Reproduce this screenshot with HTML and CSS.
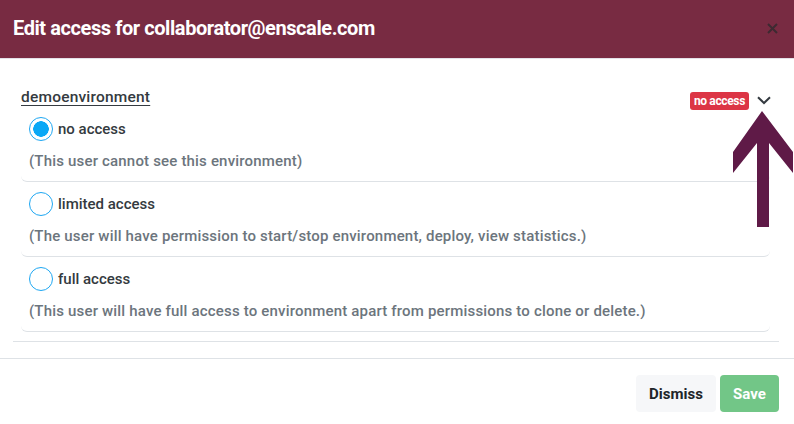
FILE: index.html
```html
<!DOCTYPE html>
<html lang="en">
<head>
<meta charset="utf-8">
<title>Edit access</title>
<link rel="stylesheet" href="styles.css">
</head>
<body>
<div class="modal">
  <header class="modal-header">
    <h1 class="modal-title">Edit access for collaborator@enscale.com</h1>
    <button class="close" aria-label="Close">
      <svg width="11" height="11" viewBox="0 0 11 11"><path d="M1 1L10 10M10 1L1 10" stroke="currentColor" stroke-width="2"/></svg>
    </button>
  </header>
  <main class="modal-body">
    <section class="env">
      <div class="env-head">
        <a class="env-name" href="#">demoenvironment</a>
        <div class="env-status">
          <span class="badge">no access</span>
          <svg class="chevron" width="14" height="9" viewBox="0 0 14 9"><path d="M1 1.2L7 7L13 1.2" fill="none" stroke="currentColor" stroke-width="2"/></svg>
        </div>
      </div>
      <div class="option">
        <label class="opt-row"><span class="radio checked"></span><span class="opt-label">no access</span></label>
        <p class="opt-desc">(This user cannot see this environment)</p>
      </div>
      <div class="option">
        <label class="opt-row"><span class="radio"></span><span class="opt-label">limited access</span></label>
        <p class="opt-desc">(The user will have permission to start/stop environment, deploy, view statistics.)</p>
      </div>
      <div class="option">
        <label class="opt-row"><span class="radio"></span><span class="opt-label">full access</span></label>
        <p class="opt-desc">(This user will have full access to environment apart from permissions to clone or delete.)</p>
      </div>
    </section>
  </main>
  <footer class="modal-footer">
    <button class="btn btn-light">Dismiss</button>
    <button class="btn btn-save">Save</button>
  </footer>
  <svg class="annot-arrow" width="794" height="424" viewBox="0 0 794 424"><polygon points="762,111 793,152 793,173 769,143 769,227 757,227 757,143 733,173 733,152" fill="#5f1a47"/></svg>
</div>
</body>
</html>
```
FILE: styles.css
```css
* { box-sizing: border-box; }
html, body { margin: 0; padding: 0; background: #fff; }
body {
  font-family: Roboto, "Liberation Sans", sans-serif;
  color: #343a40;
  width: 794px;
  height: 424px;
  overflow: hidden;
}
.modal { position: relative; width: 794px; height: 424px; }
.modal-header {
  height: 59px;
  background: #782b42;
  border-bottom: 1px solid #e4e1e8;
  display: flex;
  align-items: center;
  justify-content: space-between;
  padding: 0 16px 2px 13px;
}
.modal-title {
  margin: 0;
  color: #fff;
  font-size: 20px;
  font-weight: 700;
  letter-spacing: -0.42px;
}
.close {
  border: 0;
  background: none;
  padding: 0;
  margin-top: 0;
  color: #3d2a31;
  display: flex;
}
.modal-body {
  padding: 28px 15px 16px 13px;
  border-bottom: 1px solid #dee2e6;
}
.env {
  padding: 0 9px 9px 8px;
  border-bottom: 1px solid #dee2e6;
}
.env-head {
  height: 20px;
  display: flex;
  align-items: center;
  justify-content: space-between;
}
.env-name {
  color: #343a40;
  font-size: 15.5px;
  font-weight: 500;
  letter-spacing: 0.2px;
  text-decoration: underline;
  text-underline-offset: 3px;
}
.env-status { display: flex; align-items: center; gap: 8px; margin: 7px -1px 0 0; }
.badge {
  background: #dc3545;
  color: #fff;
  font-size: 12px;
  font-weight: 700;
  height: 18px;
  line-height: 18px;
  padding: 0 4px;
  border-radius: 3px;
  letter-spacing: -0.35px;
}
.chevron { color: #343a40; display: block; }
.option {
  padding: 10px 8px 10px;
  border-bottom: 1px solid #dee2e6;
  border-radius: 0 0 6px 6px;
}
.opt-row { display: flex; align-items: center; gap: 5px; height: 24px; }
.radio {
  width: 24px;
  height: 24px;
  border-radius: 50%;
  border: 1.5px solid #1ea7f2;
  background: #fff;
  flex: none;
}
.radio.checked {
  background: radial-gradient(circle, #0aa8f6 0 7.5px, #fff 8px);
}
.opt-label {
  font-size: 15px;
  font-weight: 500;
  color: #343a40;
  letter-spacing: 0;
}
.opt-desc {
  margin: 10px 0 0;
  line-height: 20px;
  font-size: 15px;
  font-weight: 500;
  color: #6c757d;
  letter-spacing: 0.18px;
}
.modal-footer {
  display: flex;
  justify-content: flex-end;
  gap: 4px;
  padding: 16px 15px 0 0;
}
.btn {
  height: 37px;
  border: 0;
  border-radius: 4px;
  font-family: inherit;
  font-size: 15px;
  font-weight: 700;
  letter-spacing: 0;
}
.btn-light { width: 80px; background: #f6f7f9; color: #212529; }
.btn-save { width: 59px; background: #72c687; color: #fff; }
.annot-arrow { position: absolute; left: 0; top: 0; pointer-events: none; }
```
